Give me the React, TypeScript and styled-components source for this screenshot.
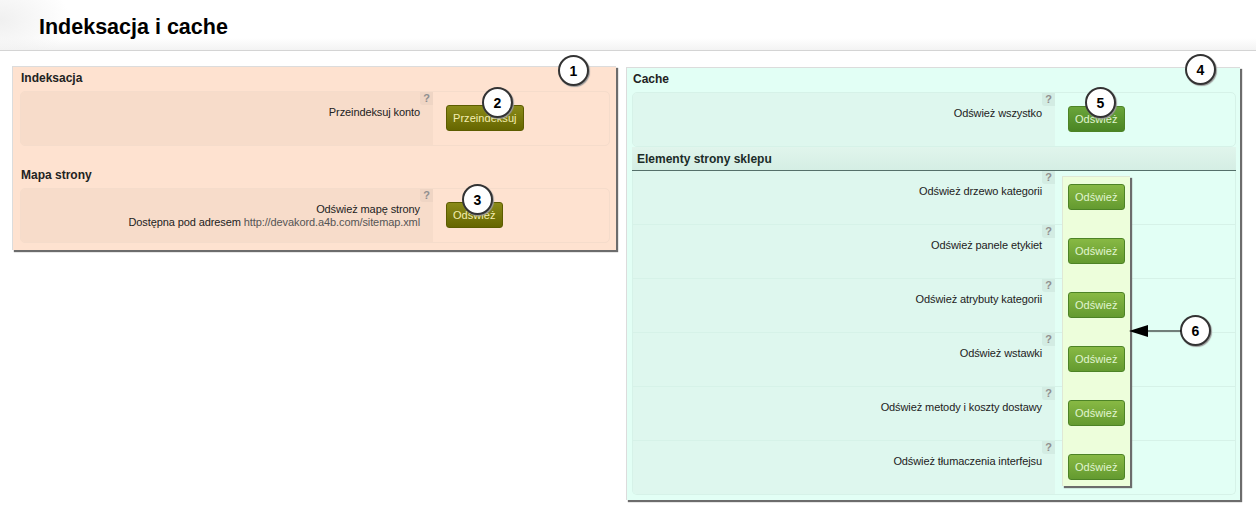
import React from 'react'
import styled, { createGlobalStyle } from 'styled-components'

const Global = createGlobalStyle`
  html, body { margin: 0; padding: 0; background: #fff; }
  body { font-family: "Liberation Sans", Arial, sans-serif; font-size: 11px; color: #222; }
`

type Tone = 'orange' | 'green'

const Page = styled.div`
  position: relative;
  width: 1256px;
  height: 514px;
  overflow: hidden;
  background: #fff;
`

const Header = styled.header`
  height: 50px;
  border-bottom: 1px solid #d4d4d4;
  padding-left: 39px;
  display: flex;
  align-items: center;
  background:
    radial-gradient(ellipse 70px 45px at 0 20px, #f0f0f0, rgba(255, 255, 255, 0)),
    linear-gradient(to bottom, #fff 0, #fff 38px, #f3f3f3 100%);
`

const Title = styled.h1`
  margin: 4px 0 0;
  font-size: 21.5px;
  font-weight: bold;
  color: #000;
`

const Main = styled.main`
  display: flex;
  align-items: flex-start;
  gap: 10px;
  padding: 15px 0 0 12px;
`

const Panel = styled.section<{ $tone: Tone }>`
  box-sizing: border-box;
  width: ${p => (p.$tone === 'orange' ? '604px' : '614px')};
  margin-top: ${p => (p.$tone === 'orange' ? '0' : '1px')};
  padding: ${p => (p.$tone === 'orange' ? '0 6px 7px 7px' : '0 4px 5px 5px')};
  background: ${p => (p.$tone === 'orange' ? '#fee2d0' : '#e2fff5')};
  border-top: 1px solid #dcdcdc;
  border-left: 1px solid #dcdcdc;
  box-shadow: 2px 2px 1px #6c6c6c;
`

const PanelTitle = styled.h2<{ $gap?: boolean }>`
  margin: 0;
  height: ${p => (p.$gap ? '42px' : '24px')};
  padding-bottom: 6px;
  padding-left: 1px;
  box-sizing: border-box;
  display: flex;
  align-items: flex-end;
  font-size: 12px;
  font-weight: bold;
  color: #222;
`

const SubHeader = styled.h3`
  margin: 0;
  height: 24px;
  box-sizing: border-box;
  padding: 0 0 0 5px;
  display: flex;
  align-items: center;
  font-size: 12px;
  font-weight: bold;
  color: #1c2c28;
  background: linear-gradient(to bottom, #e0f5ec, #d5eee4);
  border-bottom: 1px solid #55706a;
`

const Row = styled.div<{ $tone: Tone; $rounded?: boolean; $bottomRound?: boolean }>`
  box-sizing: border-box;
  height: ${p => (p.$rounded ? '55px' : '54px')};
  display: grid;
  grid-template-columns: ${p => (p.$tone === 'orange' ? '412px' : '422px')} 1fr;
  border: 1px solid ${p => (p.$tone === 'orange' ? '#f5dccb' : '#d6f2e8')};
  border-top-width: ${p => (p.$rounded ? '1px' : '0')};
  border-radius: ${p => (p.$rounded ? '5px' : p.$bottomRound ? '0 0 5px 5px' : '0')};
  overflow: hidden;
`

const LabelCell = styled.div<{ $tone: Tone }>`
  position: relative;
  box-sizing: border-box;
  padding: 14px 13px 0 0;
  text-align: right;
  line-height: 13px;
  font-size: 11px;
  letter-spacing: -0.1px;
  color: #222;
  background: ${p => (p.$tone === 'orange' ? '#f7dcca' : '#def7ee')};
`

const Help = styled.span<{ $tone: Tone }>`
  position: absolute;
  top: 0;
  right: 0;
  width: 13px;
  height: 13px;
  line-height: 13px;
  text-align: center;
  font-size: 11px;
  font-weight: bold;
  letter-spacing: 0;
  color: #8f8f8f;
  background: ${p => (p.$tone === 'orange' ? '#efd5c4' : '#d3ece3')};
  border-bottom-left-radius: 3px;
`

const Address = styled.span`
  color: #555;
`

const ActionCell = styled.div`
  position: relative;
  z-index: 1;
  padding: 13px 0 0 13px;
`

const Button = styled.button<{ $variant: 'olive' | 'green' | 'light' }>`
  box-sizing: border-box;
  display: block;
  height: 26px;
  padding: 0 6px;
  border: 1px solid ${p => (p.$variant === 'olive' ? '#5c5c00' : '#4d8326')};
  border-radius: 3px;
  font-family: "Liberation Sans", Arial, sans-serif;
  font-size: 11px;
  letter-spacing: 0.05px;
  color: ${p => (p.$variant === 'olive' ? '#f4eeb0' : '#e0f5d0')};
  background: ${p =>
    p.$variant === 'olive'
      ? 'linear-gradient(to bottom, #8a8a18, #666600)'
      : p.$variant === 'green'
      ? 'linear-gradient(to bottom, #6aa53a, #4a8524)'
      : 'linear-gradient(to bottom, #88b944, #649a30)'};
`

const ElementList = styled.div`
  position: relative;
`

const Highlight = styled.div`
  position: absolute;
  top: 5px;
  left: 430px;
  width: 67px;
  height: 309px;
  background: #edfedb;
  border-top: 1px solid #dfe8d6;
  border-left: 1px solid #dfe8d6;
  box-shadow: 2px 2px 1px #6c6c6c;
`

const Marker = styled.div<{ $x: number; $y: number }>`
  position: absolute;
  left: ${p => p.$x - 15}px;
  top: ${p => p.$y - 15}px;
  z-index: 3;
  box-sizing: border-box;
  width: 31px;
  height: 31px;
  border: 2px solid #333;
  border-radius: 50%;
  background: #fff;
  box-shadow: 1px 1px 1px #999;
  display: flex;
  align-items: center;
  justify-content: center;
  font-size: 14px;
  font-weight: bold;
  color: #000;
`

const Arrow = styled.svg`
  position: absolute;
  left: 1129px;
  top: 323px;
  z-index: 3;
`

const elements = [
  'Odśwież drzewo kategorii',
  'Odśwież panele etykiet',
  'Odśwież atrybuty kategorii',
  'Odśwież wstawki',
  'Odśwież metody i koszty dostawy',
  'Odśwież tłumaczenia interfejsu',
]

const markers = [
  { n: 1, x: 573, y: 70 },
  { n: 2, x: 497, y: 102 },
  { n: 3, x: 477, y: 199 },
  { n: 4, x: 1200, y: 69 },
  { n: 5, x: 1100, y: 102 },
  { n: 6, x: 1195, y: 330 },
]

const App = () => {
  return (
    <Page>
      <Global />
      <Header>
        <Title>Indeksacja i cache</Title>
      </Header>
      <Main>
        <Panel $tone="orange">
          <PanelTitle>Indeksacja</PanelTitle>
          <Row $tone="orange" $rounded>
            <LabelCell $tone="orange">
              <Help $tone="orange">?</Help>
              Przeindeksuj konto
            </LabelCell>
            <ActionCell>
              <Button $variant="olive">Przeindeksuj</Button>
            </ActionCell>
          </Row>
          <PanelTitle $gap>Mapa strony</PanelTitle>
          <Row $tone="orange" $rounded>
            <LabelCell $tone="orange">
              <Help $tone="orange">?</Help>
              Odśwież mapę strony
              <br />
              Dostępna pod adresem <Address>http://devakord.a4b.com/sitemap.xml</Address>
            </LabelCell>
            <ActionCell>
              <Button $variant="olive">Odśwież</Button>
            </ActionCell>
          </Row>
        </Panel>

        <Panel $tone="green">
          <PanelTitle>Cache</PanelTitle>
          <Row $tone="green" $rounded>
            <LabelCell $tone="green">
              <Help $tone="green">?</Help>
              Odśwież wszystko
            </LabelCell>
            <ActionCell>
              <Button $variant="green">Odśwież</Button>
            </ActionCell>
          </Row>
          <SubHeader>Elementy strony sklepu</SubHeader>
          <ElementList>
            <Highlight />
            {elements.map((name, i) => (
              <Row $tone="green" key={name} $bottomRound={i === elements.length - 1}>
                <LabelCell $tone="green">
                  <Help $tone="green">?</Help>
                  {name}
                </LabelCell>
                <ActionCell>
                  <Button $variant="light">Odśwież</Button>
                </ActionCell>
              </Row>
            ))}
          </ElementList>
        </Panel>
      </Main>

      {markers.map(m => (
        <Marker key={m.n} $x={m.x} $y={m.y}>
          {m.n}
        </Marker>
      ))}
      <Arrow width="52" height="16" viewBox="0 0 52 16">
        <path d="M0 8 L19 2 L19 14 Z" fill="#000" />
        <path d="M19 8 H52" stroke="#000" strokeWidth="1.2" />
      </Arrow>
    </Page>
  )
}

export default App
